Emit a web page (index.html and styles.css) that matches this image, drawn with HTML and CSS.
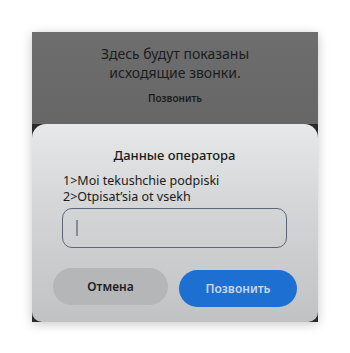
FILE: index.html
```html
<!DOCTYPE html>
<html lang="ru">
<head>
<meta charset="utf-8">
<link rel="stylesheet" href="styles.css">
</head>
<body>
<div class="frame">
  <div class="backdrop">
    <p class="empty">Здесь будут показаны<br>исходящие звонки.</p>
    <p class="call-link">Позвонить</p>
  </div>
  <div class="dialog">
    <h1 class="title">Данные оператора</h1>
    <div class="menu">
      <div>1&gt;Moi tekushchie podpiski</div>
      <div>2&gt;Otpisat’sia ot vsekh</div>
    </div>
    <div class="input"><span class="caret"></span></div>
    <div class="actions">
      <button class="btn cancel">Отмена</button>
      <button class="btn primary">Позвонить</button>
    </div>
  </div>
</div>
</body>
</html>
```
FILE: styles.css
```css
html, body {
  margin: 0;
  padding: 0;
  background: #ffffff;
}
body {
  width: 350px;
  height: 353px;
  font-family: "Noto Sans", "DejaVu Sans", sans-serif;
}
.frame {
  margin: 32px 0 0 32px;
  width: 286px;
  height: 290px;
  background: #2a2a2a;
  display: flex;
  flex-direction: column;
  box-shadow: 0 2px 10px rgba(0,0,0,0.22);
}
.backdrop {
  height: 92px;
  background: linear-gradient(#6e6e6e, #666666);
  display: flex;
  flex-direction: column;
  align-items: center;
  color: #1c1c1c;
}
.empty {
  margin: 12px 0 0 0;
  font-size: 14px;
  line-height: 19px;
  text-align: center;
}
.call-link {
  margin: 10px 0 0 0;
  font-size: 10px;
  font-weight: 600;
  line-height: 12px;
}
.dialog {
  flex: 1;
  background: linear-gradient(#e7e8e9, #d4d6d7 40%, #c0c2c3);
  border-radius: 14px 14px 10px 10px;
  display: flex;
  flex-direction: column;
  padding: 0 31px 0 30px;
}
.title {
  margin: 22px 0 0 0;
  font-size: 13px;
  font-weight: 500;
  line-height: 18px;
  text-align: center;
  color: #1a1a1a;
}
.menu {
  margin-top: 9px;
  font-size: 12.5px;
  line-height: 16px;
  color: #1a1a1a;
  padding-left: 1px;
}
.input {
  margin-top: 3px;
  height: 38px;
  border: 1px solid #5c6878;
  border-radius: 10px;
  display: flex;
  align-items: center;
  padding-left: 13px;
}
.caret {
  width: 2px;
  height: 16px;
  background: #8a8a8a;
}
.actions {
  margin: 20px 0 0 -9px;
  display: flex;
  align-items: flex-start;
  gap: 11px;
}
.btn {
  flex-shrink: 0;
  border: none;
  height: 37px;
  border-radius: 19px;
  font-family: "Noto Sans", "DejaVu Sans", sans-serif;
  font-size: 12px;
  font-weight: 600;
  padding: 0;
}
.cancel {
  width: 115px;
  background: #b4b6b7;
  color: #1e1e1e;
}
.primary {
  width: 118px;
  margin-top: 2px;
  background: #1e6fd2;
  color: #c6d7ee;
}
```
